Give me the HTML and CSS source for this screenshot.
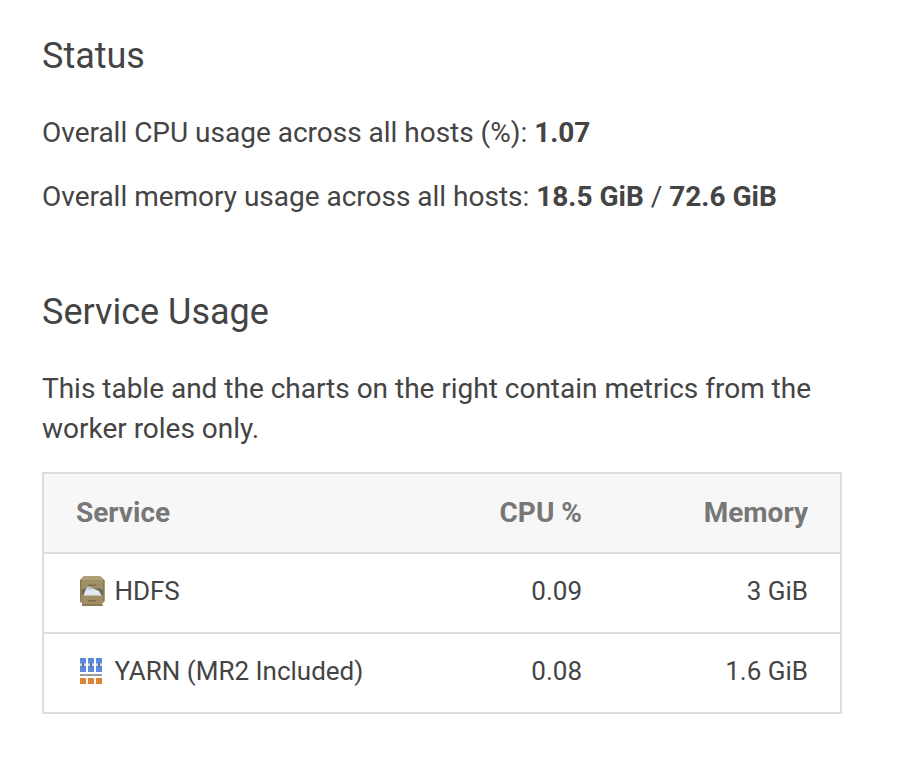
FILE: index.html
```html
<!DOCTYPE html>
<html lang="en">
<head>
<meta charset="utf-8">
<title>Status</title>
<link rel="stylesheet" href="styles.css">
</head>
<body>
<main class="panel">
  <section class="status">
    <h2>Status</h2>
    <p>Overall CPU usage across all hosts (%): <strong>1.07</strong></p>
    <p>Overall memory usage across all hosts: <strong>18.5 GiB</strong> / <strong>72.6 GiB</strong></p>
  </section>
  <section class="usage">
    <h2>Service Usage</h2>
    <p class="note">This table and the charts on the right contain metrics from the worker roles only.</p>
    <table>
      <colgroup><col class="c1"><col class="c2"><col class="c3"></colgroup>
      <thead><tr><th>Service</th><th>CPU %</th><th>Memory</th></tr></thead>
      <tbody>
        <tr>
          <td><span class="service"><svg class="icon" viewBox="0 0 32 32">
            <path fill="#a08f65" d="M8 1h16l4.500 4v22l-2 1v3H6v-3l-2-1V5z"/>
            <path fill="#ae9f76" d="M8 1h16l4 4H4z"/>
            <path fill="#8b7a52" d="M4 5h1.500v21H4zM27 5h1.500v21H27zM6 29h20.500v2H6z"/>
            <path fill="#7d6e49" d="M12 9.500h8v1.500h-8zM12 25h8v1.500h-8z"/>
            <path fill="#6d6b59" d="M6 14.500l3-1h14l4 1V20H6z"/>
            <path fill="#e3e7ef" d="M7.500 20.500L10 14l2-2.500 5 2 6 2.500 2.500 4.500z"/>
            <path fill="#b3c7dc" d="M10 14l2-2.500 5 2-2 1.500z"/>
          </svg>HDFS</span></td><td>0.09</td><td>3 GiB</td>
        </tr>
        <tr>
          <td><span class="service"><svg class="icon" viewBox="0 0 32 32">
            <path fill="#5b8bde" d="M4 3h6v5.500H4zM12 3h6v5.500h-6zM20 3h6v5.500h-6zM4 11h6v6H4zM12 11h6v6h-6zM20 11h6v6h-6z"/>
            <path fill="#5b8bde" opacity=".3" d="M4 8.500h6V11H4zM12 8.500h6V11h-6zM20 8.500h6V11h-6z"/>
            <path fill="#64718d" d="M6 8h2v4H6zM14 8h2v4h-2zM22 8h2v4h-2z"/>
            <path fill="#9b9b9b" d="M4 19h22v2H4z"/>
            <path fill="#dd8335" d="M4 23h6v6H4zM12 23h6v6h-6zM20 23h6v6h-6z"/>
          </svg>YARN (MR2 Included)</span></td><td>0.08</td><td>1.6 GiB</td>
        </tr>
      </tbody>
    </table>
  </section>
</main>
</body>
</html>
```
FILE: styles.css
```css
* { box-sizing: border-box; }
body { margin: 0; background: #fff; color: #444; font: 28px/40px Roboto, sans-serif; }
.panel { width: 800px; margin-left: 42px; padding-top: 32px; }
h2 { margin: 0; font-size: 36px; line-height: 48px; font-weight: 400; }
p { margin: 0 0 24px; letter-spacing: -0.01px; }
h2 + p { margin-top: 33px; }
.usage { margin-top: 71px; }
p.note { margin-bottom: 23px; }
table { width: 800px; table-layout: fixed; border-collapse: collapse; border: 2px solid #dcdcdc; }
.c1 { width: 380px; }
.c2 { width: 191px; }
tr { height: 80px; border-bottom: 2px solid #dcdcdc; }
th, td { padding: 0 32px; text-align: right; white-space: nowrap; }
th { background: #f7f7f7; color: #777; font-weight: 700; }
td { padding-bottom: 4px; font-size: 26px; }
th:first-child, td:first-child { text-align: left; }
.service { display: flex; align-items: center; gap: 6.4px; }
.icon { width: 32px; height: 32px; flex: none; }
```
